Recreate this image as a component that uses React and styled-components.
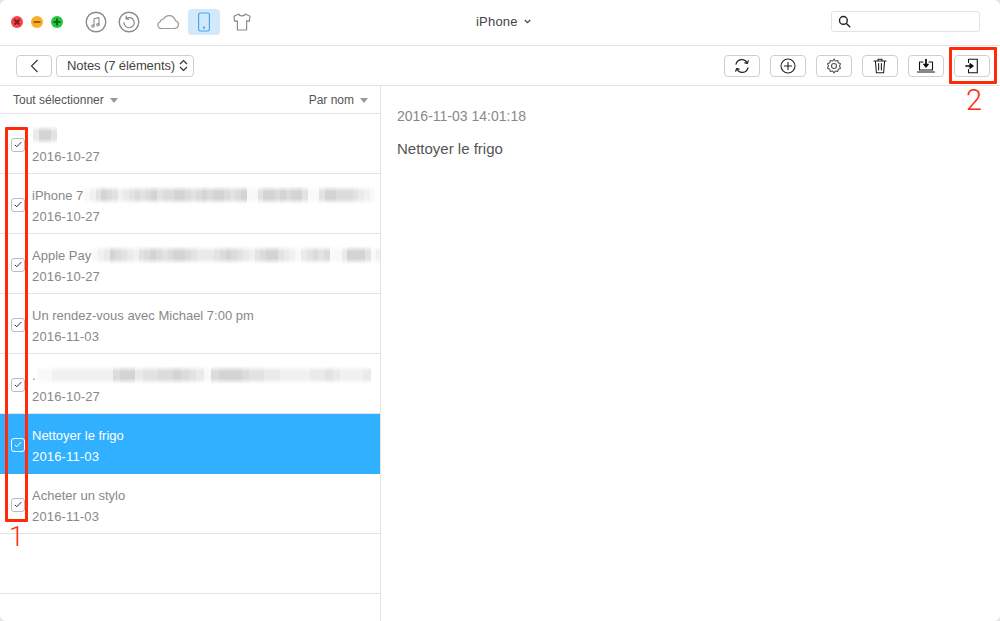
import React from 'react';
import styled, { createGlobalStyle } from 'styled-components';

const GlobalStyle = createGlobalStyle`
  html, body {
    margin: 0;
    padding: 0;
    background: #e4e4e4;
  }
  * {
    box-sizing: border-box;
  }
`;

const notes = [
  { id: 1, title: '', smudge: '3664', smudgeWidth: 6, date: '2016-10-27' },
  { id: 2, title: 'iPhone 7', smudge: '1246542345456455665456566545611466565664114665554321', smudgeWidth: 5.6, date: '2016-10-27' },
  { id: 3, title: 'Apple Pay', smudge: '12365432456545665433345654324566432134545113666412', smudgeWidth: 5.8, date: '2016-10-27' },
  { id: 4, title: 'Un rendez-vous avec Michael 7:00 pm', date: '2016-11-03' },
  { id: 5, title: '.', smudge: '11222222225663445565431566654433222233432223', smudgeWidth: 7.6, date: '2016-10-27' },
  { id: 6, title: 'Nettoyer le frigo', date: '2016-11-03', selected: true },
  { id: 7, title: 'Acheter un stylo', date: '2016-11-03' },
];

const Icon = ({ children, w = 24, h = 24, color = '#333', sw = 1.2 }) => (
  <svg width={w} height={h} viewBox={`0 0 ${w} ${h}`} fill="none" stroke={color} strokeWidth={sw} strokeLinecap="round" strokeLinejoin="round">
    {children}
  </svg>
);

export default function App() {
  return (
    <Window>
      <GlobalStyle />
      <TitleBar>
        <Lights>
          <Light $bg="#f2474a"><svg width="8" height="8" viewBox="0 0 8 8" stroke="#8c1a1c" strokeWidth="2"><path d="M1.500 1.500l5 5M6.500 1.500l-5 5" /></svg></Light>
          <Light $bg="#f9ae2b"><svg width="8" height="8" viewBox="0 0 8 8" stroke="#9a6308" strokeWidth="2"><path d="M0.500 4h7" /></svg></Light>
          <Light $bg="#25c63c"><svg width="8" height="8" viewBox="0 0 8 8" stroke="#0c6b1c" strokeWidth="2"><path d="M0.500 4h7M4 0.500v7" /></svg></Light>
        </Lights>
        <NavIcons>
          <NavIcon>
            <Icon w={22} h={22} color="#8c8c8c" sw={1.4}>
              <circle cx="11" cy="11" r="9.800" />
              <path d="M9 15V7.800l5-1.200v7" strokeWidth="1.100" />
              <circle cx="7.900" cy="15" r="1.200" strokeWidth="1.100" />
              <circle cx="12.900" cy="13.800" r="1.200" strokeWidth="1.100" />
            </Icon>
          </NavIcon>
          <NavIcon>
            <Icon w={22} h={22} color="#8c8c8c" sw={1.4}>
              <circle cx="11" cy="11" r="9.800" />
              <path d="M8 7.600a5.100 5.100 0 1 1-2 4M8.200 5.200L8 7.800l2.600.5" strokeWidth="1.200" />
            </Icon>
          </NavIcon>
          <CloudIcon>
            <Icon w={24} h={18} color="#9a9a9a" sw={1.200}>
              <path d="M6 15.500h12.500a4 4 0 0 0 .8-7.900 6.200 6.200 0 0 0-11.600-1.600 3.600 3.600 0 0 0-3.600 3A3.400 3.400 0 0 0 6 15.500z" />
            </Icon>
          </CloudIcon>
          <ActiveNav>
            <Icon w={14} h={20} color="#4aa6ee" sw={1.200}>
              <rect x="1.600" y="1" width="10.800" height="18" rx="1.800" />
              <circle cx="7" cy="15.600" r="0.600" fill="#4aa6ee" />
            </Icon>
          </ActiveNav>
          <NavIcon>
            <Icon w={20} h={20} color="#8c8c8c" sw={1.200}>
              <path d="M6.800 2L2 4.200l.6 5 2.800-.4V18h9.200V8.800l2.800.4.6-5L13.200 2c-.6 2.400-5.800 2.400-6.400 0z" />
            </Icon>
          </NavIcon>
        </NavIcons>
        <DeviceName>
          iPhone
          <svg width="7" height="5" viewBox="0 0 7 5" fill="none" stroke="#444" strokeWidth="1.200"><path d="M.8 1l2.700 2.600L6.200 1" /></svg>
        </DeviceName>
        <Search>
          <Icon w={13} h={13} color="#222" sw={1.400}>
            <circle cx="5.400" cy="5.400" r="3.900" />
            <path d="M8.400 8.400l3.400 3.400" />
          </Icon>
        </Search>
      </TitleBar>

      <ToolBar>
        <BackButton>
          <svg width="9" height="14" viewBox="0 0 9 14" fill="none" stroke="#333" strokeWidth="1.100"><path d="M7.500 1L1.500 7l6 6" /></svg>
        </BackButton>
        <SelectButton>
          Notes (7 éléments)
          <svg width="9" height="13" viewBox="0 0 9 13" fill="none" stroke="#333" strokeWidth="1.200"><path d="M1 5l3.500-3.500L8 5M1 8l3.500 3.500L8 8" /></svg>
        </SelectButton>
        <Actions>
          <ToolButton>
            <Icon w={16} h={16} color="#222" sw={1.200}>
              <path d="M2 6.200A6 6 0 0 1 13.200 5M14 9.800A6 6 0 0 1 2.800 11" />
              <path d="M14.300 2.800l-.9 2.600-2.600-.5M1.700 13.200l.9-2.600 2.600.5" />
            </Icon>
          </ToolButton>
          <ToolButton>
            <Icon w={16} h={16} color="#222" sw={1.100}>
              <circle cx="8" cy="8" r="7" />
              <path d="M8 4.400v7.200M4.400 8h7.200" />
            </Icon>
          </ToolButton>
          <ToolButton>
            <Icon w={16} h={16} color="#555" sw={1.100}>
              <path d="M8 1l1.300 2 2.400-.5.600 2.300 2.200 1-1 2.200 1 2.200-2.200 1-.6 2.300-2.400-.5L8 15l-1.300-2-2.400.5-.6-2.300-2.200-1 1-2.200-1-2.200 2.200-1 .6-2.300 2.400.5z" />
              <circle cx="8" cy="8" r="2.500" />
            </Icon>
          </ToolButton>
          <ToolButton>
            <Icon w={14} h={16} color="#222" sw={1.100}>
              <path d="M1 3h12M5 3V1.200h4V3M2.400 3l1 11.800h7.200l1-11.800" />
              <path d="M5.600 5.500v6.500M8.400 5.500v6.500" />
            </Icon>
          </ToolButton>
          <ToolButton>
            <Icon w={18} h={14} color="#111" sw={1.100}>
              <path d="M6 3H2.500v8h13V3H12M.5 13h17" />
              <path d="M9 .5v6" strokeWidth="1.800" />
              <path d="M6.600 5.200h4.800L9 8.200z" fill="#111" />
            </Icon>
          </ToolButton>
          <ToolButton>
            <Icon w={14} h={16} color="#111" sw={1.100}>
              <path d="M3.500 4.500V1.200h8.800v13.600H3.500v-3.300" />
              <path d="M.8 8h4.500" strokeWidth="1.500" />
              <path d="M5 5.600L8.200 8 5 10.400z" fill="#111" />
            </Icon>
          </ToolButton>
        </Actions>
      </ToolBar>

      <Body>
        <Sidebar>
          <ListHeader>
            <SortLabel>Tout sélectionner<Caret /></SortLabel>
            <SortLabel>Par nom<Caret /></SortLabel>
          </ListHeader>
          {notes.map((note) => (
            <Row key={note.id} $selected={note.selected}>
              <Check $selected={note.selected}>
                <svg width="8" height="7" viewBox="0 0 8 7" fill="none" stroke={note.selected ? '#fff' : '#333'} strokeWidth="1"><path d="M.8 3.800l2 2L7.300 1" /></svg>
              </Check>
              <RowText $selected={note.selected}>
                <RowTitle>
                  {note.title}
                  {note.smudge && (
                    <Smudge>
                      {note.smudge.split('').map((shade, i) => (
                        <SmudgeCell key={i} style={{ width: note.smudgeWidth, opacity: Number(shade) / 7 }} />
                      ))}
                    </Smudge>
                  )}
                </RowTitle>
                <RowDate>{note.date}</RowDate>
              </RowText>
            </Row>
          ))}
          <EmptyRow />
        </Sidebar>
        <Detail>
          <DetailDate>2016-11-03 14:01:18</DetailDate>
          <DetailText>Nettoyer le frigo</DetailText>
        </Detail>
      </Body>

      <MarkOne />
      <NumberOne>1</NumberOne>
      <MarkTwo />
      <NumberTwo>2</NumberTwo>
    </Window>
  );
}

const Window = styled.div`
  position: relative;
  display: flex;
  flex-direction: column;
  width: 1000px;
  height: 621px;
  overflow: hidden;
  background: #fff;
  border-radius: 6px;
  font-family: "Liberation Sans", Arial, sans-serif;
`;

const TitleBar = styled.div`
  display: flex;
  align-items: center;
  flex: 0 0 46px;
  border-bottom: 1px solid #e3e3e3;
  padding: 0 20px 2px 11px;
`;

const Lights = styled.div`
  display: flex;
  gap: 8px;
`;

const Light = styled.span`
  display: flex;
  align-items: center;
  justify-content: center;
  width: 12px;
  height: 12px;
  border-radius: 50%;
  background: ${(p) => p.$bg};
`;

const NavIcons = styled.div`
  display: flex;
  align-items: center;
  margin-left: 16px;
`;

const NavIcon = styled.span`
  display: flex;
  align-items: center;
  justify-content: center;
  width: 33px;
  height: 26px;
`;

const CloudIcon = styled(NavIcon)`
  width: 43px;
  padding-left: 2px;
`;

const ActiveNav = styled(NavIcon)`
  width: 32px;
  margin-right: 5px;
  background: #d2e9fb;
  border-radius: 4px;
`;

const DeviceName = styled.div`
  display: flex;
  align-items: center;
  gap: 6px;
  margin-left: 218px;
  font-size: 13px;
  letter-spacing: 0.2px;
  color: #444;
`;

const Search = styled.div`
  display: flex;
  align-items: center;
  width: 149px;
  height: 21px;
  margin-left: auto;
  padding-left: 6px;
  border: 1px solid #e2e2e2;
  border-radius: 3px;
`;

const ToolBar = styled.div`
  display: flex;
  align-items: center;
  flex: 0 0 40px;
  padding: 0 10px 0 16px;
  border-bottom: 1px solid #e3e3e3;
`;

const ToolButton = styled.button`
  display: flex;
  align-items: center;
  justify-content: center;
  width: 36px;
  height: 22px;
  padding: 0;
  background: #fff;
  border: 1px solid #cfcfcf;
  border-radius: 4px;
`;

const BackButton = styled(ToolButton)`
  margin-right: 4px;
`;

const SelectButton = styled(ToolButton)`
  justify-content: space-between;
  width: 138px;
  padding: 0 5px 0 10px;
  font-family: inherit;
  font-size: 13px;
  letter-spacing: -0.1px;
  color: #444;
`;

const Actions = styled.div`
  display: flex;
  gap: 10px;
  margin-left: auto;
`;

const Body = styled.div`
  display: flex;
  flex: 1;
  min-height: 0;
`;

const Sidebar = styled.div`
  display: flex;
  flex-direction: column;
  flex: 0 0 381px;
  width: 381px;
  min-width: 0;
  overflow: hidden;
  border-right: 1px solid #e3e3e3;
`;

const ListHeader = styled.div`
  display: flex;
  justify-content: space-between;
  align-items: center;
  flex: 0 0 28px;
  padding: 0 12px 0 13px;
  border-bottom: 1px solid #e3e3e3;
`;

const SortLabel = styled.span`
  display: flex;
  align-items: center;
  gap: 6px;
  font-size: 12px;
  color: #555;
`;

const Caret = styled.i`
  width: 0;
  height: 0;
  margin-top: 1px;
  border-left: 4.5px solid transparent;
  border-right: 4.5px solid transparent;
  border-top: 5px solid #999;
`;

const Row = styled.div`
  display: flex;
  align-items: center;
  flex: 0 0 60px;
  padding-left: 11px;
  overflow: hidden;
  background: ${(p) => (p.$selected ? '#31b0ff' : '#fff')};
  border-bottom: 1px solid ${(p) => (p.$selected ? '#31b0ff' : '#e3e3e3')};
`;

const EmptyRow = styled.div`
  flex: 0 0 60px;
  border-bottom: 1px solid #e3e3e3;
`;

const Check = styled.span`
  display: flex;
  flex: none;
  align-items: center;
  justify-content: center;
  width: 14px;
  height: 14px;
  margin-top: 2px;
  border: 1px solid ${(p) => (p.$selected ? '#fff' : '#bdbdbd')};
  border-radius: 3px;
  background: ${(p) => (p.$selected ? 'transparent' : '#fff')};
`;

const RowText = styled.div`
  display: flex;
  flex-direction: column;
  gap: 6px;
  min-width: 0;
  margin: 4px 0 0 7px;
  color: ${(p) => (p.$selected ? '#fff' : '#888')};
`;

const RowTitle = styled.div`
  display: flex;
  align-items: center;
  height: 15px;
  font-size: 13px;
  white-space: nowrap;
`;

const RowDate = styled.div`
  height: 15px;
  font-size: 13px;
  letter-spacing: 0.15px;
  line-height: 15px;
`;

const Smudge = styled.span`
  display: flex;
  height: 18px;
  margin-left: 1px;
  filter: blur(0.6px);
`;

const SmudgeCell = styled.i`
  flex: none;
  height: 100%;
  background: linear-gradient(#fff 0, #cdcdcd 30%, #cdcdcd 70%, #fff 100%);
`;

const Detail = styled.div`
  display: flex;
  flex-direction: column;
  flex: 1;
  padding: 22px 16px;
`;

const DetailDate = styled.div`
  font-size: 14px;
  line-height: 16px;
  color: #888;
`;

const DetailText = styled.div`
  margin-top: 16px;
  font-size: 15px;
  line-height: 18px;
  color: #555;
`;

const MarkOne = styled.div`
  position: absolute;
  left: 5px;
  top: 127px;
  width: 23px;
  height: 395px;
  border: 3px solid #ff2a0c;
  border-radius: 1px;
`;

const MarkTwo = styled.div`
  position: absolute;
  left: 949px;
  top: 47px;
  width: 48px;
  height: 37px;
  border: 3px solid #ff2a0c;
  border-radius: 1px;
`;

const NumberOne = styled.span`
  position: absolute;
  left: 9px;
  top: 522px;
  font-family: Roboto, sans-serif;
  font-weight: 300;
  font-size: 27px;
  line-height: 30px;
  color: #ff2a0c;
`;

const NumberTwo = styled.span`
  position: absolute;
  left: 966px;
  top: 84px;
  font-family: Roboto, sans-serif;
  font-weight: 300;
  font-size: 29px;
  line-height: 32px;
  color: #ff2a0c;
`;
